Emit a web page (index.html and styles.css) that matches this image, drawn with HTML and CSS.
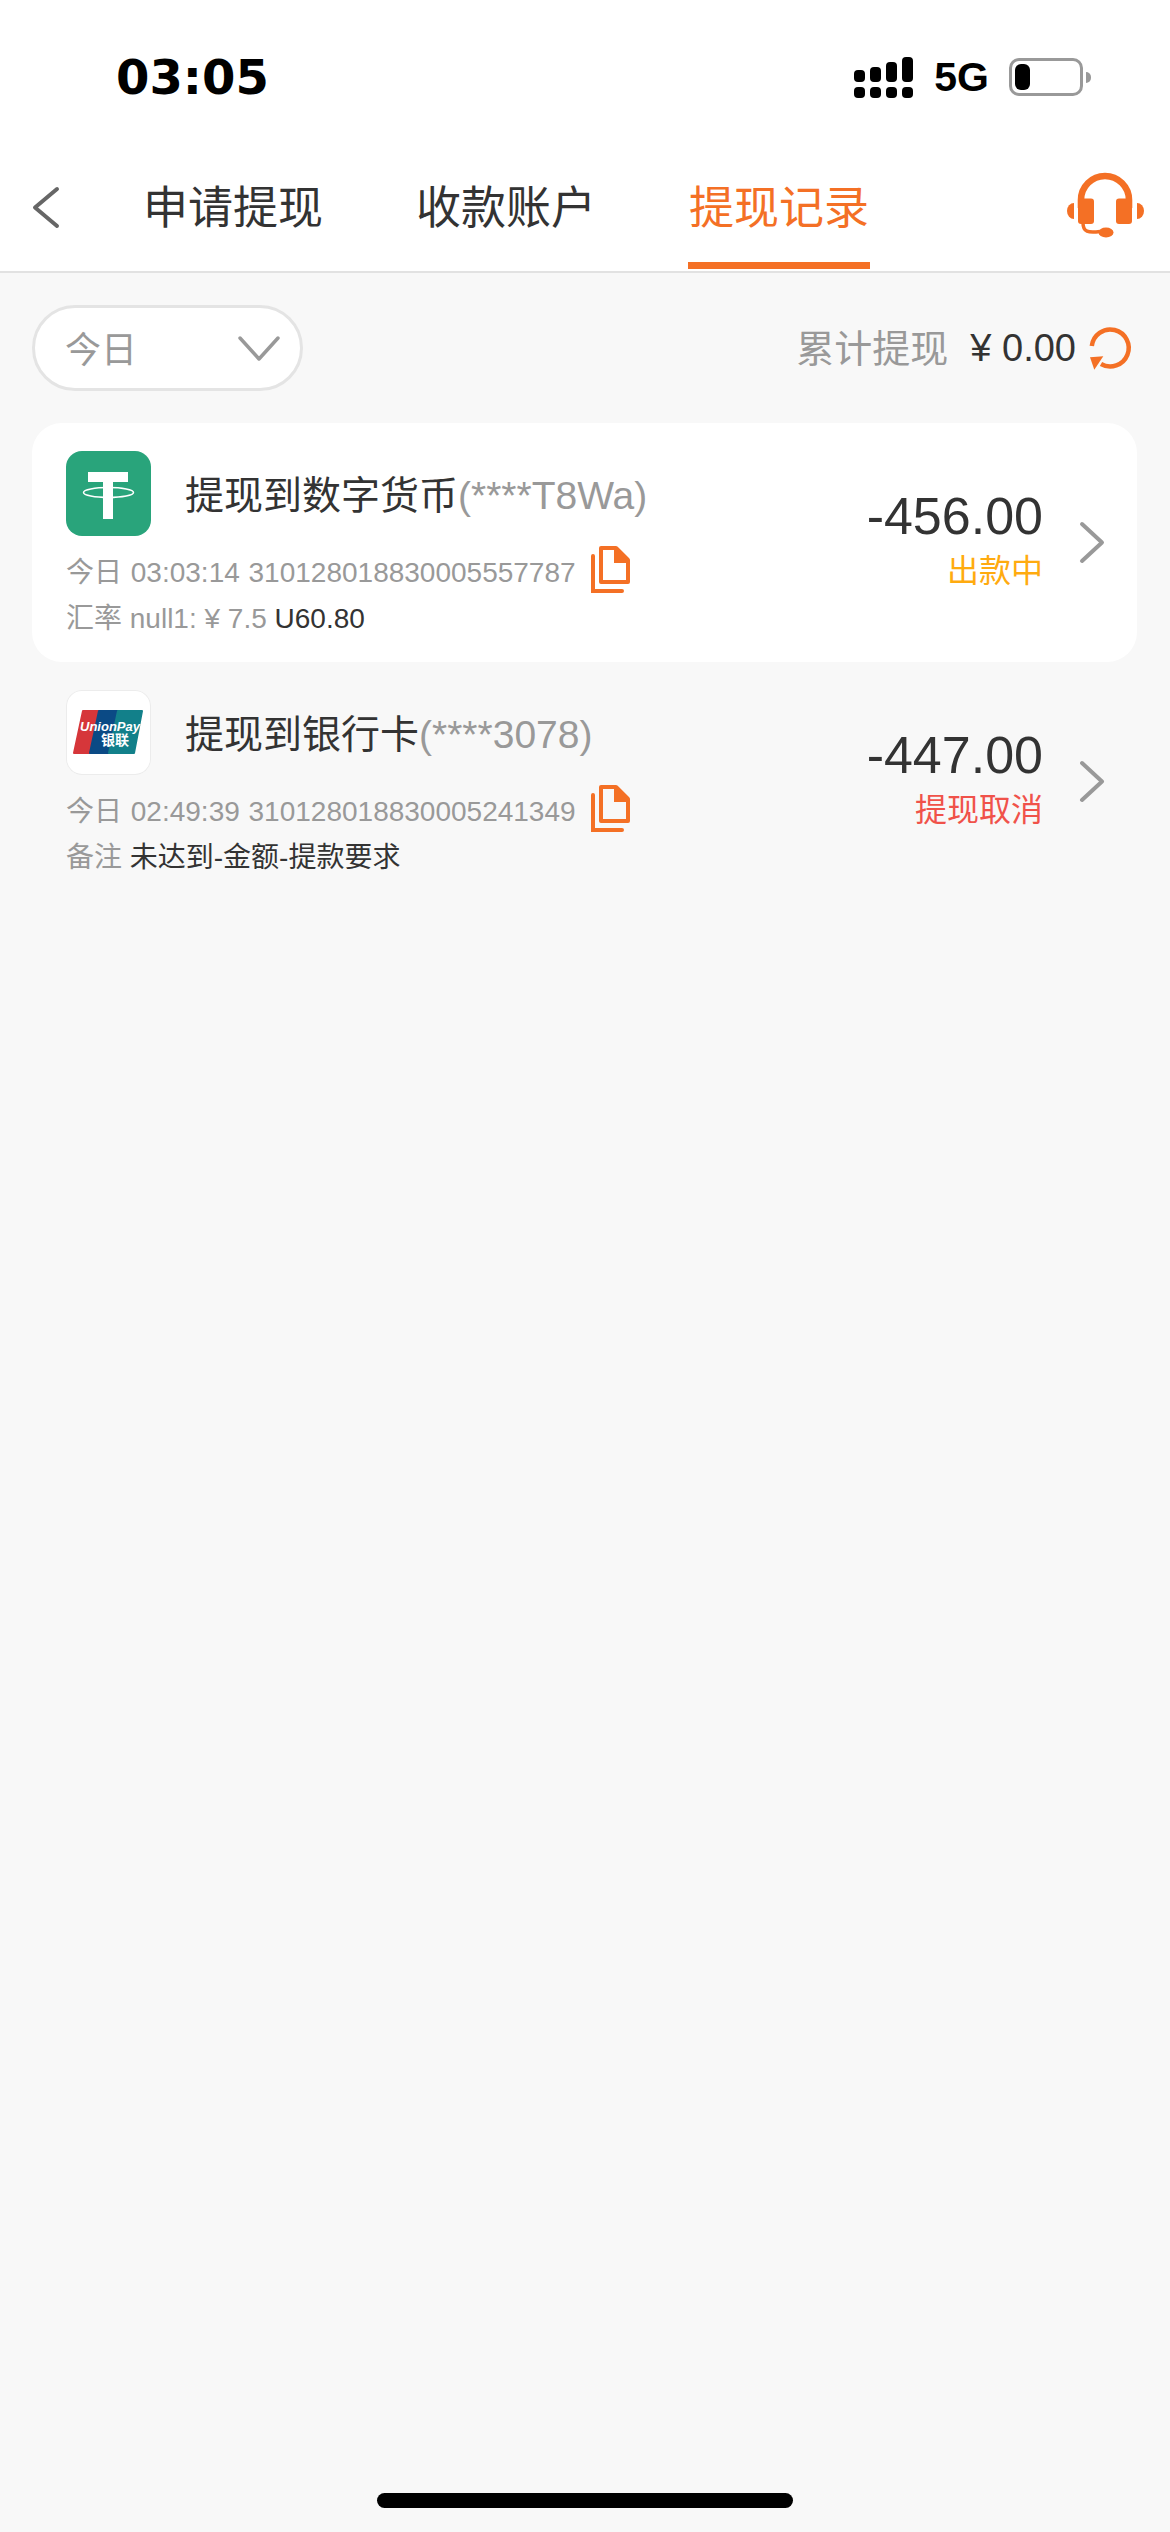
FILE: index.html
```html
<!DOCTYPE html>
<html lang="zh-CN">
<head>
  <meta charset="UTF-8" />
  <meta name="viewport" content="width=device-width, initial-scale=1.0" />
  <title>提现记录</title>
  <link rel="stylesheet" href="styles.css">
</head>
<body>
  <div class="page">

    <header class="top">
      <div class="status-bar">
        <span class="clock">03:05</span>
        <div class="status-icons">
          <svg class="signal" width="59" height="41" viewBox="0 0 59 41" fill="#000">
            <rect x="0" y="13" width="11" height="12" rx="4" />
            <rect x="16" y="10" width="11" height="15" rx="4" />
            <rect x="32" y="5" width="11" height="20" rx="4" />
            <rect x="48" y="0" width="11" height="25" rx="4" />
            <rect x="0" y="30" width="11" height="11" rx="4" />
            <rect x="16" y="30" width="11" height="11" rx="4" />
            <rect x="32" y="30" width="11" height="11" rx="4" />
            <rect x="48" y="30" width="11" height="11" rx="4" />
          </svg>
          <span class="network">5G</span>
          <div class="battery"><div class="battery-level"></div></div>
          <div class="battery-nub"></div>
        </div>
      </div>

      <nav class="tabs">
        <svg class="back" width="29" height="43" viewBox="0 0 29 43" fill="none" stroke="#666" stroke-width="4" stroke-linecap="round" stroke-linejoin="round">
          <path d="M26 3 L4 21.5 L26 40" />
        </svg>
        <a class="tab">申请提现</a>
        <a class="tab">收款账户</a>
        <a class="tab active">提现记录</a>
        <svg class="headset" width="82" height="72" viewBox="24 20 82 72" fill="#f47025">
          <path d="M41 58 V50 A24 24 0 0 1 89 50 V58" fill="none" stroke="#f47025" stroke-width="6.6" />
          <rect x="38" y="48.5" width="16" height="25.5" rx="3" />
          <rect x="76" y="48.5" width="16" height="25.5" rx="3" />
          <path d="M34 53 A7 8 0 0 0 34 69 Z" />
          <path d="M97 53 A7 8 0 0 1 97 69 Z" />
          <path d="M43 73 C43 82 48 83 60 81.500" fill="none" stroke="#f47025" stroke-width="3.500" />
          <ellipse cx="66" cy="82.500" rx="7.500" ry="5" />
        </svg>
      </nav>
    </header>

    <section class="toolbar">
      <div class="filter">
        <span class="filter-label">今日</span>
        <svg width="44" height="27" viewBox="0 0 44 27" fill="none" stroke="#999" stroke-width="3.500" stroke-linecap="round" stroke-linejoin="round">
          <path d="M3 3 L22 24 L41 3" />
        </svg>
      </div>
      <div class="total">
        <span class="total-label">累计提现</span>
        <span class="total-value">¥ 0.00</span>
        <svg width="45" height="46" viewBox="0 0 45 46" fill="none">
          <path d="M3.800 21 A18.500 18.500 0 1 1 13 39" stroke="#f47025" stroke-width="4.500" />
          <path d="M2 32.300 L15.300 31.300 L6.300 44.700 Z" fill="#f47025" />
        </svg>
      </div>
    </section>

    <section class="records">
      <article class="record highlighted">
        <div class="record-main">
          <div class="record-head">
            <div class="coin-icon tether">
              <svg width="85" height="85" viewBox="0 0 85 85">
                <path d="M22 21 H62 V31 H47 V68 H37 V31 H22 Z" fill="#fff" />
                <ellipse cx="42.500" cy="41.500" rx="25" ry="5" fill="none" stroke="#fff" stroke-width="1.500" />
              </svg>
            </div>
            <div class="record-title">提现到数字货币<span class="account">(****T8Wa)</span></div>
          </div>
          <div class="record-meta">
            <span>今日 03:03:14 310128018830005557787</span>
            <svg class="copy" width="41" height="47" viewBox="0 0 41 47" fill="none" stroke="#f47025" stroke-width="4">
              <path d="M11 2 H26 L38 14 V36 H11 Z" stroke-linejoin="round" />
              <path d="M25 2 V16 H38 V13 L27 2 Z" fill="#f47025" stroke-width="2" />
              <path d="M3 10 V45 H32" stroke-linecap="round" />
            </svg>
          </div>
          <div class="record-note">汇率 null1: ¥ 7.5 <span class="dark">U60.80</span></div>
        </div>
        <div class="record-side">
          <div class="amount">-456.00</div>
          <div class="state pending">出款中</div>
        </div>
        <svg class="arrow" width="26" height="43" viewBox="0 0 26 43" fill="none" stroke="#999" stroke-width="4" stroke-linecap="round" stroke-linejoin="round">
          <path d="M3 3 L23 21.500 L3 40" />
        </svg>
      </article>

      <article class="record">
        <div class="record-main">
          <div class="record-head">
            <div class="coin-icon unionpay">
              <svg width="85" height="85" viewBox="0 0 85 85">
                <path d="M17 21 H37 L25 63 H8 Z" fill="#d6363a" stroke="#d6363a" stroke-width="2" stroke-linejoin="round" />
                <path d="M33 21 H56 L44 63 H24 Z" fill="#0b4a85" stroke="#0b4a85" stroke-width="2" stroke-linejoin="round" />
                <path d="M52 21 H76 L68 63 H43 Z" fill="#12808a" stroke="#12808a" stroke-width="2" stroke-linejoin="round" />
                <text class="up-latin" x="14" y="41">UnionPay</text>
                <text class="up-cjk" x="35" y="55">银联</text>
              </svg>
            </div>
            <div class="record-title">提现到银行卡<span class="account">(****3078)</span></div>
          </div>
          <div class="record-meta">
            <span>今日 02:49:39 310128018830005241349</span>
            <svg class="copy" width="41" height="47" viewBox="0 0 41 47" fill="none" stroke="#f47025" stroke-width="4">
              <path d="M11 2 H26 L38 14 V36 H11 Z" stroke-linejoin="round" />
              <path d="M25 2 V16 H38 V13 L27 2 Z" fill="#f47025" stroke-width="2" />
              <path d="M3 10 V45 H32" stroke-linecap="round" />
            </svg>
          </div>
          <div class="record-note">备注 <span class="dark">未达到-金额-提款要求</span></div>
        </div>
        <div class="record-side">
          <div class="amount">-447.00</div>
          <div class="state cancelled">提现取消</div>
        </div>
        <svg class="arrow" width="26" height="43" viewBox="0 0 26 43" fill="none" stroke="#999" stroke-width="4" stroke-linecap="round" stroke-linejoin="round">
          <path d="M3 3 L23 21.500 L3 40" />
        </svg>
      </article>
    </section>

    <div class="home-bar"></div>
  </div>
</body>
</html>
```

FILE: styles.css
```css
* {
  box-sizing: border-box;
}

body {
  margin: 0;
  background-color: #f8f8f8;
  color: #333;
  font-family: "Liberation Sans", "Noto Sans CJK SC", sans-serif;
}

.page {
  display: flex;
  flex-direction: column;
  height: 2532px;
  overflow: hidden;
}

.top {
  background-color: #fff;
  border-bottom: 2px solid #e2e2e2;
}

.status-bar {
  display: flex;
  align-items: center;
  justify-content: space-between;
  height: 154px;
  padding: 0 79px 0 116px;
}

.clock {
  font-family: "DejaVu Sans", sans-serif;
  font-size: 48px;
  font-weight: bold;
  color: #000;
}

.status-icons {
  display: flex;
  align-items: center;
}

.network {
  margin: 0 20px 0 21px;
  font-size: 41px;
  font-weight: bold;
  color: #000;
}

.battery {
  width: 74px;
  height: 38px;
  padding: 3px;
  border: 3px solid #999;
  border-radius: 10px;
}

.battery-level {
  width: 15px;
  height: 26px;
  background-color: #000;
  border-radius: 6px;
}

.battery-nub {
  width: 5px;
  height: 11px;
  margin-left: 3px;
  background-color: #999;
  border-radius: 0 5px 5px 0;
}

.tabs {
  display: flex;
  align-items: flex-start;
  height: 117px;
  padding: 0 24px 0 31px;
}

.back {
  margin: 32px 82px 0 0;
}

.tab {
  height: 115px;
  padding: 33px 1px 0;
  margin-right: 91px;
  border-bottom: 7px solid transparent;
  font-size: 45px;
  line-height: 44px;
  color: #333;
}

.tab.active {
  margin-right: 0;
  color: #f47025;
  border-bottom-color: #f47025;
}

.headset {
  margin: 16px 0 0 auto;
}

.toolbar {
  display: flex;
  align-items: center;
  justify-content: space-between;
  padding: 32px 37px 32px 32px;
}

.filter {
  display: flex;
  align-items: center;
  justify-content: space-between;
  width: 271px;
  height: 86px;
  padding: 0 19px 0 30px;
  background-color: #fff;
  border: 3px solid #e4e4e4;
  border-radius: 43px;
  font-size: 36px;
  color: #999;
}

.filter-label {
  padding-bottom: 2px;
}

.total {
  display: flex;
  align-items: center;
  font-size: 38px;
}

.total-label {
  padding-bottom: 6px;
  margin-right: 22px;
  color: #999;
}

.total-value {
  margin-right: 12px;
}

.records {
  margin: 0 33px 0 32px;
}

.record {
  display: flex;
  height: 239px;
  padding: 28px 32px 0 34px;
}

.highlighted {
  background-color: #fff;
  border-radius: 30px;
}

.record-main {
  flex: 1;
}

.record-head {
  display: flex;
  align-items: center;
  gap: 34px;
}

.coin-icon {
  width: 85px;
  height: 85px;
  border-radius: 16px;
  overflow: hidden;
}

.coin-icon svg {
  display: block;
}

.tether {
  background-color: #29a47b;
}

.unionpay {
  background-color: #fff;
  box-shadow: inset 0 0 0 1px #ececec;
}

.up-latin {
  font-size: 13px;
  font-weight: bold;
  font-style: italic;
  fill: #fff;
}

.up-cjk {
  font-size: 14px;
  font-weight: bold;
  fill: #fff;
}

.record-title {
  padding-bottom: 3px;
  font-size: 39px;
  color: #333;
}

.account {
  color: #999;
}

.record-meta {
  display: flex;
  align-items: center;
  gap: 14px;
  margin-top: 10px;
  font-size: 28px;
  word-spacing: 1px;
  color: #999;
}

.record-note {
  margin-top: 8px;
  font-size: 28px;
  line-height: 36px;
  color: #999;
}

.dark {
  color: #333;
}

.record-side {
  padding-top: 35px;
  text-align: right;
}

.amount {
  font-size: 52px;
  line-height: 60px;
  color: #333;
}

.state {
  margin-top: 5px;
  font-size: 32px;
  line-height: 40px;
}

.pending {
  color: #ffab0f;
}

.cancelled {
  color: #f0524a;
}

.arrow {
  margin: 70px 0 0 36px;
}

.home-bar {
  width: 416px;
  height: 15px;
  margin: auto auto 24px;
  background-color: #000;
  border-radius: 8px;
}
```
